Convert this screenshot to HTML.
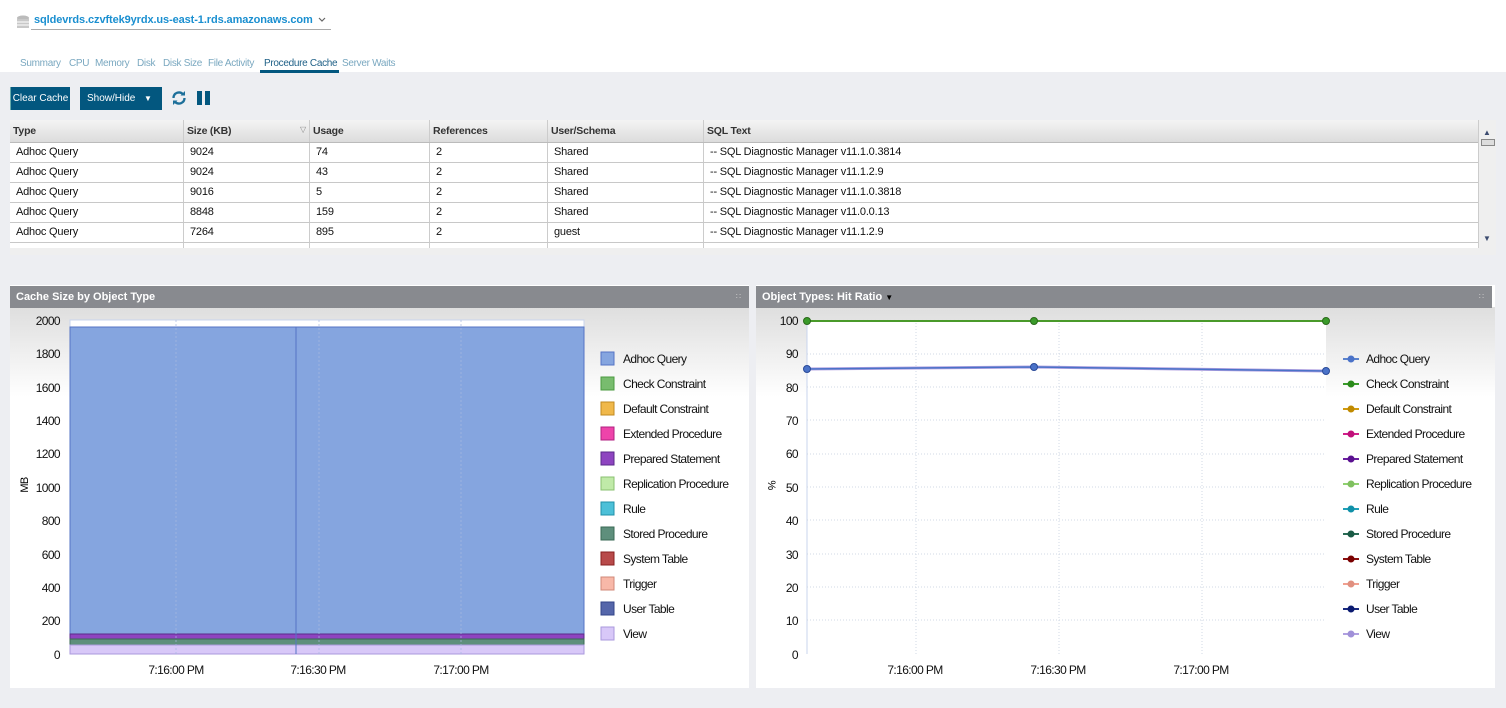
<!DOCTYPE html>
<html><head><meta charset="utf-8"><style>
*{margin:0;padding:0;box-sizing:border-box}
body{width:1506px;height:708px;background:#edeef2;font-family:"Liberation Sans",sans-serif;position:relative;overflow:hidden}
.a{position:absolute}
.top{left:0;top:0;width:1506px;height:72px;background:#fff}
.tabs span{position:absolute;top:58px;font-size:10px;color:#7aa8c0;letter-spacing:-0.3px}
.btn{background:#03577f;color:#fff;font-size:10px;height:23px;line-height:23px;top:87px}
.th{top:120px;height:23px;background:linear-gradient(#f4f4f4,#dcdcdc);border-bottom:1px solid #bbb}
.th div,.row div{position:absolute;top:0;height:100%;border-right:1px solid #ccc;padding-left:3px;font-size:11px;letter-spacing:-0.2px}
.th div{line-height:23px;color:#333;font-weight:bold;font-size:10.5px}
.row{left:10px;width:1468px;height:20px;background:#fff;border-bottom:1px solid #c8c8c8}
.row div{line-height:19px;padding-left:6px;color:#111}
.ph{height:22px;background:#888a8f;color:#fff;font-weight:bold;font-size:11px;line-height:22px;padding-left:6px}
.panel{top:285px;height:403px;background:#fff}
.grad{top:22px;left:0;right:0;height:90px;background:linear-gradient(#dedede,#fff)}
svg text{font-family:"Liberation Sans Narrow","Liberation Sans",sans-serif;letter-spacing:-0.6px}
</style></head><body>
<div class="a top"></div>
<svg class="a" style="left:15px;top:14px" width="16" height="16"><ellipse cx="8" cy="4" rx="6" ry="2.5" fill="#bbb"/><rect x="2" y="5" width="12" height="9" fill="#c8c8c8"/><line x1="2" y1="8" x2="14" y2="8" stroke="#fff"/><line x1="2" y1="11" x2="14" y2="11" stroke="#fff"/></svg>
<div class="a" style="left:34px;top:14px;font-size:11px;font-weight:bold;color:#1a8fd0;letter-spacing:-0.1px">sqldevrds.czvftek9yrdx.us-east-1.rds.amazonaws.com</div>
<svg class="a" style="left:318px;top:17px" width="8" height="6"><path d="M1 1l3 3 3-3" fill="none" stroke="#666" stroke-width="1.2"/></svg>
<div class="a" style="left:31px;top:29px;width:300px;height:1px;background:#aaa"></div>
<div class="tabs"><span style="left:20px">Summary</span><span style="left:69px">CPU</span><span style="left:95px">Memory</span><span style="left:137px">Disk</span><span style="left:163px">Disk Size</span><span style="left:208px">File Activity</span><span style="left:264px;color:#1d5f86">Procedure Cache</span><span style="left:342px">Server Waits</span></div>
<div class="a" style="left:260px;top:70px;width:79px;height:3px;background:#03577f"></div>
<div class="a btn" style="left:10px;width:60px;text-align:center;border-left:1px solid #6aa">Clear Cache</div>
<div class="a btn" style="left:80px;width:82px;padding-left:7px">Show/Hide <span style="position:absolute;left:64px;top:0;font-size:8px">&#9660;</span></div>
<svg class="a" style="left:170px;top:89px" width="18" height="18" viewBox="0 0 18 18"><path d="M3.5 9a5.5 5.5 0 0 1 9.5-3.8" fill="none" stroke="#1d6f9a" stroke-width="2.3"/><path d="M14.5 9a5.5 5.5 0 0 1-9.5 3.8" fill="none" stroke="#1d6f9a" stroke-width="2.3"/><path d="M10.5 6.5h4.5V2z" fill="#1d6f9a"/><path d="M7.5 11.5H3V16z" fill="#1d6f9a"/></svg>
<div class="a" style="left:197px;top:91px;width:5px;height:14px;background:#03577f"></div>
<div class="a" style="left:205px;top:91px;width:5px;height:14px;background:#03577f"></div>

<div class="a" style="left:10px;top:120px;width:1486px;height:135px;background:#efefef"></div>
<div class="a" style="left:10px;top:120px;width:1468px;height:128px;background:#fff"></div>
<div class="a th" style="left:10px;width:1468px">
<div style="left:0;width:174px">Type</div><div style="left:174px;width:126px">Size (KB)<span style="position:absolute;right:3px;top:-2px;font-size:8px;color:#888;font-weight:normal">&#9661;</span></div><div style="left:300px;width:120px">Usage</div><div style="left:420px;width:118px">References</div><div style="left:538px;width:156px">User/Schema</div><div style="left:694px;width:774px;border:0">SQL Text</div></div>
<div class="a row" style="top:143px"><div style="left:0;width:174px">Adhoc Query</div><div style="left:174px;width:126px">9024</div><div style="left:300px;width:120px">74</div><div style="left:420px;width:118px">2</div><div style="left:538px;width:156px">Shared</div><div style="left:694px;border:0">-- SQL Diagnostic Manager v11.1.0.3814</div></div>
<div class="a row" style="top:163px"><div style="left:0;width:174px">Adhoc Query</div><div style="left:174px;width:126px">9024</div><div style="left:300px;width:120px">43</div><div style="left:420px;width:118px">2</div><div style="left:538px;width:156px">Shared</div><div style="left:694px;border:0">-- SQL Diagnostic Manager v11.1.2.9</div></div>
<div class="a row" style="top:183px"><div style="left:0;width:174px">Adhoc Query</div><div style="left:174px;width:126px">9016</div><div style="left:300px;width:120px">5</div><div style="left:420px;width:118px">2</div><div style="left:538px;width:156px">Shared</div><div style="left:694px;border:0">-- SQL Diagnostic Manager v11.1.0.3818</div></div>
<div class="a row" style="top:203px"><div style="left:0;width:174px">Adhoc Query</div><div style="left:174px;width:126px">8848</div><div style="left:300px;width:120px">159</div><div style="left:420px;width:118px">2</div><div style="left:538px;width:156px">Shared</div><div style="left:694px;border:0">-- SQL Diagnostic Manager v11.0.0.13</div></div>
<div class="a row" style="top:223px"><div style="left:0;width:174px">Adhoc Query</div><div style="left:174px;width:126px">7264</div><div style="left:300px;width:120px">895</div><div style="left:420px;width:118px">2</div><div style="left:538px;width:156px">guest</div><div style="left:694px;border:0">-- SQL Diagnostic Manager v11.1.2.9</div></div>
<div class="a row" style="top:243px;height:5px;border:0"><div style="left:0;width:174px"></div><div style="left:174px;width:126px"></div><div style="left:300px;width:120px"></div><div style="left:420px;width:118px"></div><div style="left:538px;width:156px"></div></div>
<div class="a" style="left:1478px;top:120px;width:18px;height:128px;background:#efefef;border-left:1px solid #ccc"></div>
<div class="a" style="left:1483px;top:128px;font-size:8px;color:#3c4c70">&#9650;</div>
<div class="a" style="left:1481px;top:139px;width:14px;height:7px;border:1px solid #888;background:#ddd"></div>
<div class="a" style="left:1483px;top:234px;font-size:8px;color:#3c4c70">&#9660;</div>

<div class="a panel" style="left:10px;width:739px">
<div class="a grad"></div>
<div class="a ph" style="left:0;top:1px;width:739px">Cache Size by Object Type<span style="position:absolute;right:8px;font-size:8px;font-weight:normal;color:#ccc">&#8759;</span></div>
</div>
<svg class="a" style="left:10px;top:285px" width="739" height="403">
<g font-size="12" fill="#111" text-anchor="end">
<text x="50" y="40">2000</text><text x="50" y="73">1800</text><text x="50" y="107">1600</text><text x="50" y="140">1400</text><text x="50" y="173">1200</text><text x="50" y="207">1000</text><text x="50" y="240">800</text><text x="50" y="274">600</text><text x="50" y="307">400</text><text x="50" y="340">200</text><text x="50" y="374">0</text></g>
<text x="18" y="200" font-size="11" transform="rotate(-90 18 200)" text-anchor="middle">MB</text>
<rect x="60" y="35" width="514" height="334" fill="#fff" stroke="#c8d4ee"/>
<rect x="60" y="42" width="514" height="307" fill="#85a5df" stroke="#5574c4"/>
<rect x="60" y="349" width="514" height="5" fill="#8e44c0" stroke="#5a2a8a"/>
<rect x="60" y="354" width="514" height="6" fill="#5e8f7c" stroke="#3a6a55"/>
<rect x="60" y="360" width="514" height="9" fill="#d8c8f8" stroke="#aa99dd"/>
<g stroke="#a8b8e0" stroke-dasharray="2,2" opacity="0.7"><line x1="166" y1="35" x2="166" y2="369"/><line x1="309" y1="35" x2="309" y2="369"/><line x1="451" y1="35" x2="451" y2="369"/></g>
<line x1="286" y1="42" x2="286" y2="369" stroke="#5574c4"/>
<g font-size="12" fill="#111" text-anchor="middle"><text x="166" y="389">7:16:00 PM</text><text x="308" y="389">7:16:30 PM</text><text x="451" y="389">7:17:00 PM</text></g>
<g font-size="12" fill="#111">
<rect x="591" y="67" width="13" height="13" fill="#85a5df" stroke="#5574c4"/><text x="613" y="78">Adhoc Query</text>
<rect x="591" y="92" width="13" height="13" fill="#78bc6e" stroke="#4a9a40"/><text x="613" y="103">Check Constraint</text>
<rect x="591" y="117" width="13" height="13" fill="#f0b84a" stroke="#c08a20"/><text x="613" y="128">Default Constraint</text>
<rect x="591" y="142" width="13" height="13" fill="#ee44aa" stroke="#b02080"/><text x="613" y="153">Extended Procedure</text>
<rect x="591" y="167" width="13" height="13" fill="#8e44c0" stroke="#5a2a8a"/><text x="613" y="178">Prepared Statement</text>
<rect x="591" y="192" width="13" height="13" fill="#c0eaa8" stroke="#8ac070"/><text x="613" y="203">Replication Procedure</text>
<rect x="591" y="217" width="13" height="13" fill="#4cc0d8" stroke="#2090a8"/><text x="613" y="228">Rule</text>
<rect x="591" y="242" width="13" height="13" fill="#5e8f7c" stroke="#3a6a55"/><text x="613" y="253">Stored Procedure</text>
<rect x="591" y="267" width="13" height="13" fill="#b84a4a" stroke="#882020"/><text x="613" y="278">System Table</text>
<rect x="591" y="292" width="13" height="13" fill="#f8b8a8" stroke="#d08878"/><text x="613" y="303">Trigger</text>
<rect x="591" y="317" width="13" height="13" fill="#5566aa" stroke="#334488"/><text x="613" y="328">User Table</text>
<rect x="591" y="342" width="13" height="13" fill="#d8c8f8" stroke="#aa99dd"/><text x="613" y="353">View</text></g>
</svg>

<div class="a panel" style="left:756px;width:739px">
<div class="a grad"></div>
<div class="a ph" style="left:0;top:1px;width:736px">Object Types: Hit Ratio <span style="font-size:8px;color:#000">&#9660;</span><span style="position:absolute;right:8px;font-size:8px;font-weight:normal;color:#ccc">&#8759;</span></div>
</div>
<svg class="a" style="left:756px;top:285px" width="739" height="403">
<g font-size="12" fill="#111" text-anchor="end">
<text x="42" y="40">100</text><text x="42" y="73">90</text><text x="42" y="107">80</text><text x="42" y="140">70</text><text x="42" y="173">60</text><text x="42" y="207">50</text><text x="42" y="240">40</text><text x="42" y="274">30</text><text x="42" y="307">20</text><text x="42" y="340">10</text><text x="42" y="374">0</text></g>
<text x="12" y="200" font-size="11" transform="rotate(90 12 200)" text-anchor="middle">%</text>
<rect x="51" y="35" width="519" height="334" fill="#fff"/>
<line x1="51" y1="35" x2="51" y2="369" stroke="#c8d4ee"/>
<g stroke="#d0d8e4" stroke-dasharray="1,2"><line x1="51" y1="69" x2="570" y2="69"/><line x1="51" y1="102" x2="570" y2="102"/><line x1="51" y1="135" x2="570" y2="135"/><line x1="51" y1="169" x2="570" y2="169"/><line x1="51" y1="202" x2="570" y2="202"/><line x1="51" y1="235" x2="570" y2="235"/><line x1="51" y1="269" x2="570" y2="269"/><line x1="51" y1="302" x2="570" y2="302"/><line x1="51" y1="335" x2="570" y2="335"/><line x1="160" y1="35" x2="160" y2="369"/><line x1="303" y1="35" x2="303" y2="369"/><line x1="446" y1="35" x2="446" y2="369"/></g>
<polyline points="51,84 278,82 570,86" fill="none" stroke="#b0a0e0" stroke-width="3"/>
<polyline points="51,84 278,82 570,86" fill="none" stroke="#4a72c8" stroke-width="1.5"/>
<line x1="51" y1="36" x2="570" y2="36" stroke="#4a9a2a" stroke-width="2"/>
<g fill="#3a9a2a" stroke="#2a6a1a"><circle cx="51" cy="36" r="3.5"/><circle cx="278" cy="36" r="3.5"/><circle cx="570" cy="36" r="3.5"/></g>
<g fill="#4a72c8" stroke="#2a4a98"><circle cx="51" cy="84" r="3.5"/><circle cx="278" cy="82" r="3.5"/><circle cx="570" cy="86" r="3.5"/></g>
<g font-size="12" fill="#111" text-anchor="middle"><text x="159" y="389">7:16:00 PM</text><text x="302" y="389">7:16:30 PM</text><text x="445" y="389">7:17:00 PM</text></g>
<g font-size="12" fill="#111">
<g stroke-width="2"><line x1="587" y1="74" x2="603" y2="74" stroke="#5a82cc"/><line x1="587" y1="99" x2="603" y2="99" stroke="#3a9a2a"/><line x1="587" y1="124" x2="603" y2="124" stroke="#d09a10"/><line x1="587" y1="149" x2="603" y2="149" stroke="#d0208a"/><line x1="587" y1="174" x2="603" y2="174" stroke="#6a20a0"/><line x1="587" y1="199" x2="603" y2="199" stroke="#90d070"/><line x1="587" y1="224" x2="603" y2="224" stroke="#20a0b8"/><line x1="587" y1="249" x2="603" y2="249" stroke="#2a6a55"/><line x1="587" y1="274" x2="603" y2="274" stroke="#8a1010"/><line x1="587" y1="299" x2="603" y2="299" stroke="#f0a090"/><line x1="587" y1="324" x2="603" y2="324" stroke="#1a2a80"/><line x1="587" y1="349" x2="603" y2="349" stroke="#b0a0e0"/></g>
<circle cx="595" cy="74" r="3.5" fill="#4a72c8"/><circle cx="595" cy="99" r="3.5" fill="#2a8a1a"/><circle cx="595" cy="124" r="3.5" fill="#c08a00"/><circle cx="595" cy="149" r="3.5" fill="#c0107a"/><circle cx="595" cy="174" r="3.5" fill="#5a1090"/><circle cx="595" cy="199" r="3.5" fill="#80c060"/><circle cx="595" cy="224" r="3.5" fill="#1090a8"/><circle cx="595" cy="249" r="3.5" fill="#1a5a45"/><circle cx="595" cy="274" r="3.5" fill="#7a0000"/><circle cx="595" cy="299" r="3.5" fill="#e09080"/><circle cx="595" cy="324" r="3.5" fill="#0a1a70"/><circle cx="595" cy="349" r="3.5" fill="#a090d8"/>
<text x="610" y="78">Adhoc Query</text><text x="610" y="103">Check Constraint</text><text x="610" y="128">Default Constraint</text><text x="610" y="153">Extended Procedure</text><text x="610" y="178">Prepared Statement</text><text x="610" y="203">Replication Procedure</text><text x="610" y="228">Rule</text><text x="610" y="253">Stored Procedure</text><text x="610" y="278">System Table</text><text x="610" y="303">Trigger</text><text x="610" y="328">User Table</text><text x="610" y="353">View</text></g>
</svg>
</body></html>
